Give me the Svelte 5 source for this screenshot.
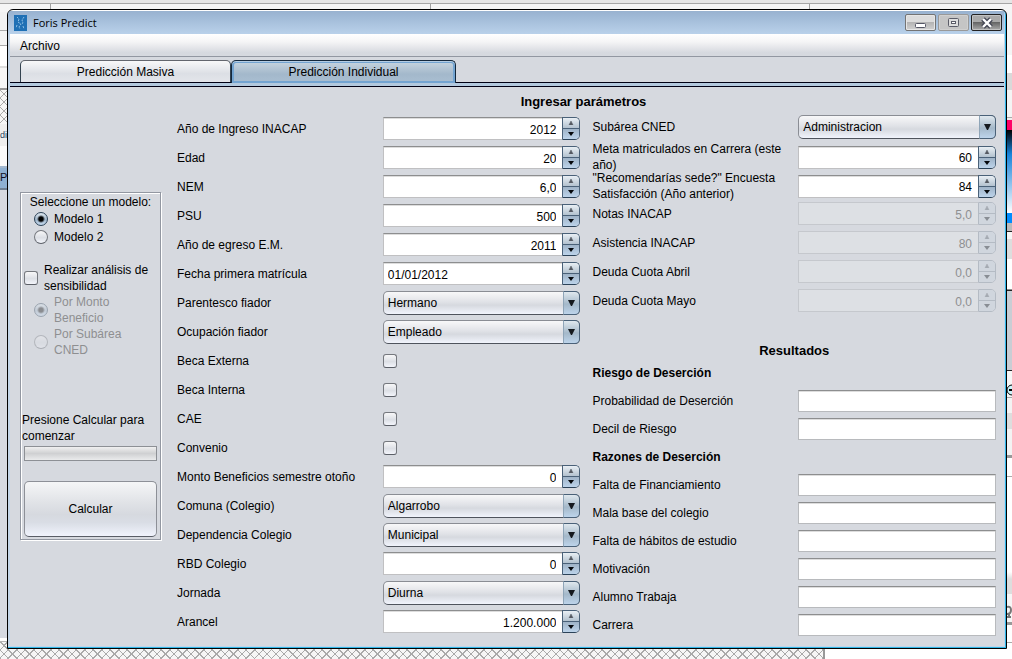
<script>
  const parametros = [
    { id: 'ingreso', label: 'Año de Ingreso INACAP', type: 'spin', value: '2012' },
    { id: 'edad', label: 'Edad', type: 'spin', value: '20' },
    { id: 'nem', label: 'NEM', type: 'spin', value: '6,0' },
    { id: 'psu', label: 'PSU', type: 'spin', value: '500' },
    { id: 'egreso', label: 'Año de egreso E.M.', type: 'spin', value: '2011' },
    { id: 'fecha', label: 'Fecha primera matrícula', type: 'spin', value: '01/01/2012', left: true },
    { id: 'parentesco', label: 'Parentesco fiador', type: 'select', value: 'Hermano' },
    { id: 'ocupacion', label: 'Ocupación fiador', type: 'select', value: 'Empleado' },
    { id: 'externa', label: 'Beca Externa', type: 'check' },
    { id: 'interna', label: 'Beca Interna', type: 'check' },
    { id: 'cae', label: 'CAE', type: 'check' },
    { id: 'convenio', label: 'Convenio', type: 'check' },
    { id: 'monto', label: 'Monto Beneficios semestre otoño', type: 'spin', value: '0' },
    { id: 'comuna', label: 'Comuna (Colegio)', type: 'select', value: 'Algarrobo' },
    { id: 'dependencia', label: 'Dependencia Colegio', type: 'select', value: 'Municipal' },
    { id: 'rbd', label: 'RBD Colegio', type: 'spin', value: '0' },
    { id: 'jornada', label: 'Jornada', type: 'select', value: 'Diurna' },
    { id: 'arancel', label: 'Arancel', type: 'spin', value: '1.200.000' }
  ];

  const sede = [
    { id: 'subarea', label: 'Subárea CNED', type: 'select', value: 'Administracion' },
    { id: 'meta', label: 'Meta matriculados en Carrera (este año)', type: 'spin', value: '60' },
    { id: 'encuesta', label: '"Recomendarías sede?" Encuesta Satisfacción (Año anterior)', type: 'spin', value: '84' },
    { id: 'notas', label: 'Notas INACAP', type: 'spin', value: '5,0', disabled: true },
    { id: 'asistencia', label: 'Asistencia INACAP', type: 'spin', value: '80', disabled: true },
    { id: 'abril', label: 'Deuda Cuota Abril', type: 'spin', value: '0,0', disabled: true },
    { id: 'mayo', label: 'Deuda Cuota Mayo', type: 'spin', value: '0,0', disabled: true }
  ];

  const resultados = [
    { titulo: 'Riesgo de Deserción', campos: ['Probabilidad de Deserción', 'Decil de Riesgo'] },
    {
      titulo: 'Razones de Deserción',
      campos: ['Falta de Financiamiento', 'Mala base del colegio', 'Falta de hábitos de estudio', 'Motivación', 'Alumno Trabaja', 'Carrera']
    }
  ];

  let modelo = $state('1');
  let tab = $state('individual');
</script>

{#snippet row(f)}
  <div class="row">
    <label for={f.id}>{f.label}</label>
    {#if f.type === 'spin'}
      <div class="spin" class:off={f.disabled}>
        <input id={f.id} class:left={f.left} type="text" value={f.value} disabled={f.disabled} />
        <div class="steps">
          <button type="button" aria-label="Aumentar" disabled={f.disabled}>
            <svg width="6" height="4" viewBox="0 0 6 4"><path d="M3 0 5 4H1Z" fill="#555a62" stroke="#555a62" stroke-width=".5" /></svg>
          </button>
          <button type="button" aria-label="Disminuir" disabled={f.disabled}>
            <svg width="6" height="4" viewBox="0 0 6 4"><path d="M0 0H6L3 4Z" fill="#05080c" /></svg>
          </button>
        </div>
      </div>
    {:else if f.type === 'select'}
      <div class="combo">
        <select id={f.id}><option>{f.value}</option></select>
        <span class="arrow">
          <svg width="7" height="6" viewBox="0 0 7 6"><path d="M0 0H7L4 6H3Z" fill="#15191e" /></svg>
        </span>
      </div>
    {:else}
      <input id={f.id} class="box" type="checkbox" />
    {/if}
  </div>
{/snippet}

<div class="desktop">
  <div class="behind" aria-hidden="true">
    <div class="strip-top"><i></i><i></i><i></i></div>
    <div class="strip-left"><span class="dic">di</span><span class="pe">P</span></div>
    <div class="strip-right">
      <svg class="zoomout" width="12" height="12" viewBox="0 0 12 12"><circle cx="6" cy="6" r="5" fill="#c9f4fb" stroke="#000" /><path d="M3 6H9" stroke="#000" stroke-width="2" /></svg>
      <svg class="stamp" width="12" height="14" viewBox="0 0 12 14"><path d="M0 2Q4 1 4 5T0 9M0 12H4M2 9V13" fill="none" stroke="#777" stroke-width="2" /></svg>
    </div>
    <div class="strip-bottom"></div>
  </div>

  <main class="window">
    <header class="titlebar">
      <svg width="13" height="16" viewBox="0 0 13 16">
        <rect width="13" height="16" fill="#1f70b5" />
        <path d="M3 2 5 4 4 7 7 9 5 12 6 14M10 2 8 5 9 8 7 9M3 10 2 13M9 11 10 14" fill="none" stroke="#8fc0e6" stroke-dasharray="2 1" />
      </svg>
      <h1>Foris Predict</h1>
      <div class="winbtns">
        <button type="button" aria-label="Minimizar">
          <svg width="12" height="14" viewBox="0 0 12 14"><rect x=".5" y="7.5" width="10" height="4" rx="1" fill="#fff" stroke="#555766" /></svg>
        </button>
        <button type="button" class="max" aria-label="Maximizar">
          <svg width="12" height="14" viewBox="0 0 12 14"><rect x=".5" y="2.5" width="10" height="8" rx="1" fill="#ddd" stroke="#5b5c68" /><rect x="3.5" y="5.5" width="4" height="2" fill="#fff" stroke="#5b5c68" /></svg>
        </button>
        <button type="button" class="close" aria-label="Cerrar">
          <svg width="12" height="14" viewBox="0 0 12 14"><path d="M2 3 10 11M10 3 2 11" stroke="#454755" stroke-width="5" /><path d="M2 3 10 11M10 3 2 11" stroke="#fff" stroke-width="2.4" /></svg>
        </button>
      </div>
    </header>

    <nav class="menubar"><button type="button">Archivo</button></nav>

    <div class="tabs" role="tablist">
      <button type="button" role="tab" class="masiva" class:active={tab === 'masiva'} aria-selected={tab === 'masiva'} onclick={() => (tab = 'masiva')}>Predicción Masiva</button>
      <button type="button" role="tab" class:active={tab === 'individual'} aria-selected={tab === 'individual'} onclick={() => (tab = 'individual')}>Predicción Individual</button>
    </div>

    <div class="panel">
      <aside class="side">
        <p class="pick">Seleccione un modelo:</p>
        <label class="opt"><input type="radio" value="1" bind:group={modelo} />Modelo 1</label>
        <label class="opt"><input type="radio" value="2" bind:group={modelo} />Modelo 2</label>
        <label class="opt sens"><input class="box" type="checkbox" /><span>Realizar análisis de sensibilidad</span></label>
        <label class="opt dim"><input type="radio" name="por" checked disabled /><span>Por Monto Beneficio</span></label>
        <label class="opt dim"><input type="radio" name="por" disabled /><span>Por Subárea CNED</span></label>
        <label class="status" for="avance">Presione Calcular para comenzar</label>
        <progress id="avance" value="0" max="100"></progress>
        <button type="button" class="calc">Calcular</button>
      </aside>

      <form class="form">
        <h2>Ingresar parámetros</h2>
        <div class="columns">
          <div class="inputs">
            {#each parametros as f}{@render row(f)}{/each}
          </div>
          <div>
            {#each sede as f}{@render row(f)}{/each}
            <h2 class="res">Resultados</h2>
            {#each resultados as g, gi}
              <h3>{g.titulo}</h3>
              {#each g.campos as c, ci}
                <div class="row out">
                  <label for={`res-${gi}-${ci}`}>{c}</label>
                  <input id={`res-${gi}-${ci}`} type="text" readonly />
                </div>
              {/each}
            {/each}
          </div>
        </div>
      </form>
    </div>
  </main>
</div>

<style>
  :global(body) { margin: 0; background: #fff; }
  .desktop, .desktop * { box-sizing: border-box; }
  .desktop {
    position: relative;
    min-height: 100vh;
    padding: 9px 5px 10px 7px;
    overflow: hidden;
    font: 12px/16px "Liberation Sans", Arial, sans-serif;
    color: #000;
  }
  button, input, select { font: inherit; color: inherit; margin: 0; padding: 0; }
  button { border: 0; background: none; }
  h1, h2, h3, p { margin: 0; }
  svg { display: block; flex: none; }

  /* windows that peek out around the dialog */
  .behind > div { position: absolute; overflow: hidden; }
  .strip-top {
    inset: 0 0 auto 0;
    height: 20px;
    padding: 4px 202px 0 50px;
    display: flex;
    justify-content: space-between;
    background: linear-gradient(#e6e6e6 0 3px, #a6a6a6 3px 4px, #f5f5f5 4px);
  }
  .strip-top i { width: 1px; background: #a0a0a0; }
  .strip-left {
    inset: 12px auto 0 0;
    width: 8px;
    background:
      linear-gradient(#f2f2f2 0 18px, #aaa 18px 19px, #f4f4f4 19px 33px, #aaa 33px 34px, #fff 34px 54px, #ddd 54px 56px, #f6f6f6 56px 76px, #999 76px 78px, transparent 78px 112px, #eee 112px 134px, #fafafa 134px 154px, #a2b8d0 154px 156px, #8eb0d2 156px 176px, #6f8093 176px 178px, #d5d9e1 178px 626px, #fff 626px 629px, #b5b5b5 629px 630px, transparent 630px),
      repeating-linear-gradient(45deg, #aaa 0 1px, transparent 1px 6px),
      repeating-linear-gradient(-45deg, #aaa 0 1px, #f6f6f6 1px 6px);
  }
  .strip-left span { position: absolute; left: 0; font-size: 9px; line-height: 12px; color: #25435e; }
  .dic { top: 117px; }
  .strip-left .pe { top: 159px; font-size: 11px; color: #112; }
  .strip-right {
    inset: 9px 0 0 auto;
    width: 6px;
    background: linear-gradient(#f5f5f5 0 46px, #fff 46px 64px, #d9d9d9 64px 81px, #f4f4f4 81px 108px, #aaa 108px 109px, #eee 109px 111px, #f06 111px 121px, #000 121px, #1683da 145px, #fff 204px, #008cff 204px 214px, #bbb 214px 222px, #222 222px 223px, #f6f6f6 223px 230px, #ddd 230px 250px, #fff 250px 280px, #222 281px 282px, #c9cdd4 282px 361px, #222 361px 362px, #f6f6f6 362px 388px, #aaa 388px 389px, #f3f3f3 389px 404px, #ddd 404px 420px, #f3f3f3 420px 446px, #999 446px 449px, #fff 449px 467px, #aaa 467px 468px, #fff 468px 563px, #ddd 570px 585px, #f6f6f6 585px 613px, #999 613px 616px, #fff 616px 633px, #aaa 633px 634px, #fff 634px);
  }
  .zoomout { position: absolute; left: 0; top: 375px; }
  .stamp { position: absolute; left: 1px; top: 596px; }
  .strip-bottom {
    inset: auto 187px 0 0;
    height: 14px;
    border-right: 2px solid #999;
    background:
      repeating-linear-gradient(45deg, #aaa 0 1px, transparent 1px 6px),
      repeating-linear-gradient(-45deg, #aaa 0 1px, #f6f6f6 1px 6px);
  }

  .window {
    position: relative;
    border: 1px solid #000;
    border-radius: 6px 6px 0 0;
    overflow: hidden;
    padding: 1px 2px 2px 2px;
    background: linear-gradient(#fff 0 1px, #b9d1ea 1px 24px, #c3d5e8 24px);
    box-shadow: inset -1px -1px #2fb6e6;
  }
  .titlebar {
    display: flex;
    align-items: center;
    gap: 6px;
    height: 23px;
    margin-left: -2px;
    padding: 0 2px 0 6px;
    background: linear-gradient(#98b2d0, #b9d1ea);
  }
  .titlebar h1 { flex: 1; font: 11px/16px "Open Sans", "Noto Sans", sans-serif; }
  .winbtns { display: flex; gap: 2px; }
  .winbtns button {
    display: flex;
    justify-content: center;
    align-items: center;
    width: 31px;
    height: 17px;
    border: 1px solid #747474;
    border-radius: 2px;
    background: linear-gradient(#dcdcdc 0 45%, #b4b4b4 50%, #d2d2d2);
    box-shadow: inset 0 0 0 1px #e6e6e6;
  }
  .winbtns .max { border-color: #999; background: #c5c5c5; box-shadow: inset 0 0 0 1px #d0d0d0; }
  .winbtns .close { border-color: #222; background: linear-gradient(#aaa 0 45%, #666 50%, #aaa); box-shadow: inset 0 0 0 1px #c2c2c2; }

  .menubar {
    height: 23px;
    padding: 4px 10px 2px;
    border-bottom: 1px solid #9297a1;
    background: linear-gradient(#fff, #f5f5f6 35%, #d6d9df 85%);
  }
  .tabs {
    display: flex;
    padding: 3px 10px 0;
    height: 30px;
    border-bottom: 1px solid #000014;
    background: linear-gradient(#d6d9df 0 25px, #000014 25px 26px, #b3c9de 26px);
  }
  .tabs button {
    width: 225px;
    height: 23px;
    border: 1px solid #33424f;
    border-top-color: #63666e;
    border-bottom: 0;
    border-radius: 5px 5px 0 0;
    background: linear-gradient(#f8f8f9, #dcdfe5 60%, #e3e5ea);
  }
  .tabs .masiva { width: 211px; height: 22px; }
  .tabs .active {
    border-color: #14283c;
    background: linear-gradient(#c9d6e0, #a3b8cb 60%, #aabfd2);
    box-shadow: inset 0 1px #b5cde4, inset 0 0 0 2px #73a4d1;
  }

  .panel {
    display: flex;
    gap: 10px;
    padding: 0 8px 7px 10px;
    background: #d6d9df;
  }
  .side {
    flex: none;
    align-self: flex-start;
    display: flex;
    flex-direction: column;
    width: 141px;
    margin-top: 105px;
    padding: 1px 1px 2px;
    border: 1px solid #9297a1;
    box-shadow: inset 1px 1px #fff, 1px 1px #fff;
  }
  .pick { text-align: center; }
  .opt { display: flex; align-items: center; gap: 6px; min-height: 18px; padding: 0 6px 0 12px; }
  .sens { margin-top: 16px; padding: 0 0 0 2px; }
  .dim { color: #8e8f91; padding-right: 24px; }
  .dim input { opacity: .35; }
  .status { margin-top: 54px; }
  progress {
    appearance: none;
    width: auto;
    height: 15px;
    margin: 2px 2px 20px;
    border: 1px solid #8d9095;
    background: linear-gradient(#f0f0f0, #cfd0d2 50%, #eaebec);
  }
  progress::-webkit-progress-bar { background: transparent; }
  .calc {
    height: 56px;
    margin: 0 2px;
    border: 1px solid #8d9097;
    border-bottom-color: #595d66;
    border-radius: 5px;
    background: linear-gradient(#f5f6f7, #e2e4e8 35%, #d6d9df 60%, #d9dde5 75%, #f0f3fc);
  }

  input[type="radio"], .box {
    appearance: none;
    flex: none;
    width: 14px;
    height: 14px;
    border: 1px solid #75787e;
    border-bottom-color: #5b5f67;
    background: linear-gradient(#f7f7f8, #dcdfe5 55%, #f3f5fb);
  }
  input[type="radio"] { border-radius: 50%; }
  .box { border-radius: 3px; }
  input[type="radio"]:checked {
    border-color: #2c4257;
    background: radial-gradient(circle, #000 0 2px, transparent 4px), linear-gradient(#dfe8f0, #a0b5c9 55%, #c5daf0);
  }

  .form { flex: 1; min-width: 0; }
  h2 { font-size: 13px; line-height: 16px; text-align: center; padding: 7px 0 2px; }
  .columns { display: grid; grid-template-columns: minmax(0, 1fr) minmax(0, 1fr); gap: 12px; padding-left: 6px; }
  .inputs { padding-top: 2px; }
  .row {
    display: grid;
    grid-template-columns: 51% 49%;
    align-items: center;
    height: 29px;
  }
  .row label { padding-right: 6px; }
  .spin { display: flex; height: 23px; }
  .spin input {
    flex: 1;
    min-width: 0;
    padding: 2px 6px 0 4px;
    text-align: right;
    border: 1px solid #c0c0c2;
    border-top-color: #8d8e8f;
    border-right: 0;
    border-radius: 0;
    background: #fff;
    box-shadow: inset 0 1px #ddd;
  }
  .spin .left { text-align: left; }
  .steps {
    display: flex;
    flex-direction: column;
    width: 18px;
    border: 1px solid #4a6178;
    border-bottom-color: #2b4258;
    border-radius: 0 5px 5px 0;
    overflow: hidden;
  }
  .steps button {
    flex: 1;
    display: flex;
    align-items: center;
    justify-content: center;
    background: linear-gradient(#e9eff4, #b3c2cf);
  }
  .steps button + button { border-top: 1px solid #4a6178; background: linear-gradient(#9fb3c7, #bcd3ea); }
  .off input { color: #8e8f91; background: #dde0e4; border-color: #c5c8cd; box-shadow: none; }
  .off .steps { border-color: #b4bbc4; }
  .off .steps button, .off .steps button + button { background: #d0d6de; border-color: #b4bbc4; }
  .off svg { opacity: .35; }
  .combo { position: relative; height: 24px; }
  .combo select {
    appearance: none;
    display: block;
    width: 100%;
    height: 24px;
    padding: 0 24px 0 4px;
    border: 1px solid #8a8d94;
    border-bottom-color: #4f545d;
    border-radius: 5px;
    background: linear-gradient(#f8f8f9, #e0e2e7 45%, #d6d9df 60%, #f1f4fc);
  }
  .arrow {
    position: absolute;
    inset: 0 0 0 auto;
    width: 17px;
    display: flex;
    align-items: center;
    justify-content: center;
    pointer-events: none;
    border: 1px solid #4a6178;
    border-left-color: #8fa5b8;
    border-radius: 0 5px 5px 0;
    background: linear-gradient(#e0e8ee, #a4b8c9 55%, #bdd4eb);
  }
  .res { padding: 28px 0 0; }
  h3 { font-size: 12px; line-height: 28px; }
  .out { height: 28px; }
  .out input {
    width: 100%;
    height: 22px;
    padding: 0 4px;
    border: 1px solid #b8babd;
    border-top-color: #8d8e8f;
    background: #fff;
    box-shadow: inset 0 1px #ddd;
  }
</style>
